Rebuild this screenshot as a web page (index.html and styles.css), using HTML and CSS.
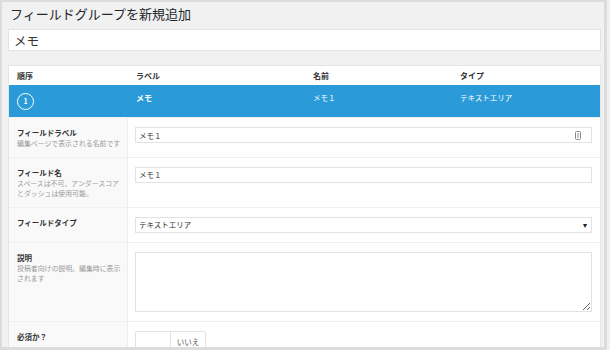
FILE: index.html
```html
<!DOCTYPE html>
<html>
    <head>
        <meta charset="UTF-8"/>
        <title>フィールドグループを新規追加</title>
        <link rel="stylesheet" href="styles.css">
    </head>
    <body>
        <div class="frame">
            <h1>フィールドグループを新規追加</h1>
            <input class="title-input" type="text" value="メモ">

            <div class="fields-box">
                <div class="fields-head">
                    <span>順序</span>
                    <span>ラベル</span>
                    <span>名前</span>
                    <span>タイプ</span>
                </div>
                <div class="field-row-active">
                    <span><span class="order">1</span></span>
                    <span class="strong">メモ</span>
                    <span>メモ１</span>
                    <span>テキストエリア</span>
                </div>

                <div class="form-row">
                    <div class="form-label">
                        <div class="label">フィールドラベル</div>
                        <div class="desc">編集ページで表示される名前です</div>
                    </div>
                    <div class="form-input">
                        <div class="input-wrap">
                            <input class="text-input" type="text" value="メモ１">
                            <svg class="input-icon" width="6" height="9" viewBox="0 0 6 9">
                                <rect x="0.5" y="0.5" width="5" height="8" rx="1" fill="none" stroke="#888" stroke-width="1"/>
                                <line x1="3" y1="2" x2="3" y2="7" stroke="#888" stroke-width="1"/>
                            </svg>
                        </div>
                    </div>
                </div>

                <div class="form-row">
                    <div class="form-label">
                        <div class="label">フィールド名</div>
                        <div class="desc">スペースは不可、アンダースコア<br>とダッシュは使用可能。</div>
                    </div>
                    <div class="form-input">
                        <input class="text-input" type="text" value="メモ１">
                    </div>
                </div>

                <div class="form-row">
                    <div class="form-label">
                        <div class="label">フィールドタイプ</div>
                    </div>
                    <div class="form-input">
                        <div class="select">
                            <span>テキストエリア</span>
                            <span class="arrow">▾</span>
                        </div>
                    </div>
                </div>

                <div class="form-row">
                    <div class="form-label">
                        <div class="label">説明</div>
                        <div class="desc">投稿者向けの説明。編集時に表示<br>されます</div>
                    </div>
                    <div class="form-input">
                        <textarea class="textarea"></textarea>
                    </div>
                </div>

                <div class="form-row">
                    <div class="form-label">
                        <div class="label">必須か？</div>
                    </div>
                    <div class="form-input">
                        <div class="toggle">
                            <span class="toggle-off"></span>
                            <span class="toggle-label">いいえ</span>
                        </div>
                    </div>
                </div>
            </div>
        </div>
    </body>
</html>
```

FILE: styles.css
```css
body {
    margin: 0;
    background: #f1f1f1;
    font-family: "Noto Sans CJK JP", "Noto Sans", sans-serif;
    color: #333;
}

.frame {
    box-sizing: border-box;
    width: 607px;
    height: 350px;
    overflow: hidden;
    border: 2px solid #dcdcdc;
    border-right-width: 3px;
    border-bottom-width: 3px;
    background: #f1f1f1;
    padding: 2px 3px 0 6px;
}

h1 {
    margin: 0 0 5px 2px;
    font-size: 13px;
    line-height: 20px;
    font-weight: normal;
    color: #23282d;
}

.title-input {
    display: block;
    box-sizing: border-box;
    width: 100%;
    height: 22px;
    margin: 0;
    padding: 0 5px;
    border: 1px solid #e2e2e2;
    background: #fff;
    font-family: inherit;
    font-size: 12.5px;
    color: #333;
    outline: none;
}

.fields-box {
    margin-top: 14px;
    background: #fff;
    border: 1px solid #e5e5e5;
    border-bottom: none;
}

.fields-head,
.field-row-active {
    display: grid;
    grid-template-columns: 119px 177px 147px 1fr;
    padding-left: 8px;
    font-size: 8px;
}

.fields-head {
    height: 19px;
    align-items: center;
    font-weight: bold;
    color: #333;
}

.field-row-active {
    height: 32px;
    box-sizing: border-box;
    padding-top: 8px;
    background: #2a9bd8;
    color: #fff;
    font-size: 7.5px;
    line-height: 9px;
}

.field-row-active .strong {
    font-weight: bold;
    font-size: 8px;
}

.order {
    display: flex;
    align-items: center;
    justify-content: center;
    box-sizing: border-box;
    width: 17px;
    height: 17px;
    border: 1.5px solid #fff;
    border-radius: 50%;
    font-size: 7px;
    font-weight: bold;
}

.form-row {
    display: flex;
    border-top: 1px solid #f0f0f0;
}

.form-row:first-of-type {
    border-top: none;
}

.form-label {
    box-sizing: border-box;
    width: 119px;
    flex-shrink: 0;
    padding: 9px 0 8px 8px;
    background: #f9f9f9;
    border-right: 1px solid #eeeeee;
}

.label {
    font-size: 7.5px;
    line-height: 11px;
    font-weight: bold;
    color: #333;
}

.desc {
    font-size: 6.9px;
    line-height: 10.5px;
    color: #999;
    white-space: nowrap;
}

.form-input {
    flex: 1;
    padding: 9px 8px 9px 7px;
}

.input-wrap {
    position: relative;
}

.text-input {
    display: block;
    box-sizing: border-box;
    width: 100%;
    height: 16px;
    margin: 0;
    padding: 0 3px;
    border: 1px solid #e2e2e2;
    font-family: inherit;
    font-size: 7.5px;
    color: #333;
    outline: none;
}

.input-icon {
    position: absolute;
    right: 11px;
    top: 4px;
}

.select {
    box-sizing: border-box;
    height: 16px;
    display: flex;
    align-items: center;
    justify-content: space-between;
    padding: 0 4px 0 3px;
    border: 1px solid #e2e2e2;
    font-size: 7.5px;
    color: #333;
}

.select .arrow {
    font-size: 8px;
    color: #222;
}

.textarea {
    display: block;
    box-sizing: border-box;
    width: 100%;
    height: 60px;
    margin: 0;
    border: 1px solid #e2e2e2;
    resize: vertical;
    outline: none;
}

.toggle {
    display: inline-flex;
    height: 20px;
    border: 1px solid #e2e2e2;
    border-radius: 2px;
    background: #fff;
}

.toggle-off {
    width: 34px;
    border-right: 1px solid #e2e2e2;
}

.toggle-label {
    width: 34px;
    display: flex;
    align-items: center;
    justify-content: center;
    font-size: 7.5px;
    color: #555;
}
```
